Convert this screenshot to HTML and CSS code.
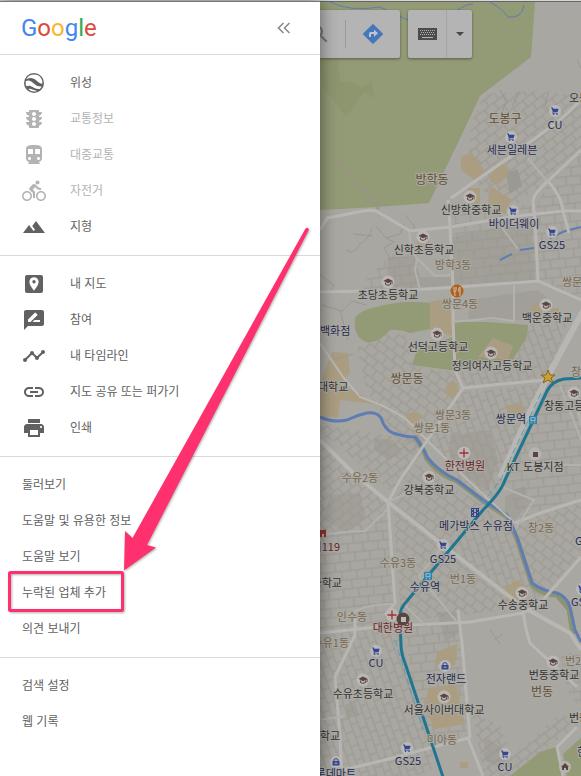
FILE: index.html
```html
<!DOCTYPE html>
<html lang="ko">
<head>
    <meta charset="UTF-8">
    <meta name="viewport" content="width=device-width, initial-scale=1.0">
    <title>Google 지도</title>
    <link rel="stylesheet" href="styles.css">
</head>
<body>
    <div class="app">
        <nav class="sidebar">
            <div class="sidebar-header">
                <a href="#" class="logo"><span class="blue">G</span><span class="red">o</span><span class="yellow">o</span><span class="blue">g</span><span class="green">l</span><span class="red">e</span></a>
                <button type="button" class="collapse" aria-label="메뉴 닫기">
                    <svg width="14" height="12" viewBox="0 0 14 12"><path d="M6.500 1 1.500 6l5 5M12.500 1l-5 5 5 5" fill="none" stroke="#8a8a8a" stroke-width="1.600"/></svg>
                </button>
            </div>

            <div class="section">
                <button type="button" class="item">
                    <svg class="icon" viewBox="0 0 24 24"><circle cx="12" cy="12" r="10"/><path fill="#fff" d="M4.200 8.200C6 4.800 9 3.600 12.300 3.600c3.200 0 5.700 1.500 7.100 4.100 1 1.900 1.200 3.500.9 5-2.200-.2-4-1.300-5.900-3.300C11.700 6.700 8.300 6 4.200 8.200zM3.700 10.200c3-1.300 5.200-.4 7.500 1.900 2.600 2.600 4.900 3.600 8.500 3.500-.5 1-1.100 1.800-1.800 2.400-4.500.4-6.500-1.800-9-2.800-1.900-.8-3.300-.5-4.600.1-.6-1.500-.8-3.200-.6-5.100zM6.400 18c2.300-.7 4.500 1.200 8.600 1.900-2.900 1.200-6.400.6-8.600-1.900z"/></svg>
                    <span>위성</span>
                </button>
                <button type="button" class="item" disabled>
                    <svg class="icon" viewBox="0 0 24 24"><path d="M20 10h-3V8.860c1.720-.45 3-2 3-3.860h-3V4c0-.55-.45-1-1-1H8c-.55 0-1 .45-1 1v1H4c0 1.860 1.280 3.410 3 3.860V10H4c0 1.860 1.280 3.410 3 3.860V15H4c0 1.860 1.280 3.410 3 3.860V20c0 .55.45 1 1 1h8c.55 0 1-.45 1-1v-1.140c1.720-.45 3-2 3-3.860h-3v-1.140c1.720-.45 3-2 3-3.860zm-8 9c-1.110 0-2-.9-2-2s.89-2 2-2c1.100 0 2 .9 2 2s-.89 2-2 2zm0-5c-1.110 0-2-.9-2-2s.89-2 2-2c1.100 0 2 .9 2 2s-.89 2-2 2zm0-5c-1.110 0-2-.9-2-2 0-1.110.89-2 2-2 1.100 0 2 .89 2 2 0 1.100-.89 2-2 2z"/></svg>
                    <span>교통정보</span>
                </button>
                <button type="button" class="item" disabled>
                    <svg class="icon" viewBox="0 0 24 24"><path d="M12 2c-4.420 0-8 .5-8 4v9.500C4 17.430 5.570 19 7.500 19L6 20.500v.5h12v-.5L16.500 19c1.930 0 3.500-1.570 3.500-3.500V6c0-3.500-3.580-4-8-4zM7.500 17c-.83 0-1.500-.67-1.500-1.500S6.670 14 7.500 14s1.500.67 1.500 1.500S8.330 17 7.500 17zm3.500-6H6V6h5v5zm5.500 6c-.83 0-1.500-.67-1.500-1.500s.67-1.500 1.500-1.500 1.500.67 1.500 1.500-.67 1.500-1.500 1.500zm1.500-6h-5V6h5v5z"/></svg>
                    <span>대중교통</span>
                </button>
                <button type="button" class="item" disabled>
                    <svg class="icon" viewBox="0 0 24 24"><path d="M15.500 5.500c1.100 0 2-.9 2-2s-.9-2-2-2-2 .9-2 2 .9 2 2 2zM5 12c-2.800 0-5 2.200-5 5s2.200 5 5 5 5-2.200 5-5-2.200-5-5-5zm0 8.500c-1.900 0-3.500-1.600-3.500-3.500s1.600-3.500 3.500-3.500 3.500 1.600 3.500 3.500-1.600 3.500-3.500 3.500zm5.800-10l2.400-2.400.8.8c1.300 1.300 3 2.100 5.100 2.100V9c-1.500 0-2.700-.6-3.600-1.500l-1.900-1.900c-.5-.4-1-.6-1.600-.6s-1.100.2-1.400.6L7.800 8.400c-.4.4-.6.9-.6 1.400 0 .6.2 1.100.6 1.400L11 14v5h2v-6.200l-2.200-2.300zM19 12c-2.800 0-5 2.200-5 5s2.200 5 5 5 5-2.200 5-5-2.200-5-5-5zm0 8.500c-1.900 0-3.500-1.600-3.500-3.500s1.600-3.500 3.500-3.500 3.500 1.600 3.500 3.500-1.600 3.500-3.500 3.500z"/></svg>
                    <span>자전거</span>
                </button>
                <button type="button" class="item">
                    <svg class="icon" viewBox="0 0 24 24"><path d="M14 6l-3.750 5 2.850 3.800-1.600 1.200C9.810 13.750 7 10 7 10l-6 8h22L14 6z"/></svg>
                    <span>지형</span>
                </button>
            </div>

            <div class="section">
                <button type="button" class="item">
                    <svg class="icon" viewBox="0 0 24 24"><path fill-rule="evenodd" d="M5 3h14a2 2 0 0 1 2 2v14a2 2 0 0 1-2 2H5a2 2 0 0 1-2-2V5a2 2 0 0 1 2-2zm7 2.200A4.600 4.600 0 0 0 7.400 9.800C7.400 13.300 12 18.800 12 18.800s4.600-5.500 4.600-9A4.600 4.600 0 0 0 12 5.200zm0 2.900a1.700 1.700 0 1 1 0 3.400 1.700 1.700 0 0 1 0-3.400z"/></svg>
                    <span>내 지도</span>
                </button>
                <button type="button" class="item">
                    <svg class="icon" viewBox="0 0 24 24"><path d="M20 2H4c-1.100 0-1.990.9-1.990 2L2 22l4-4h14c1.100 0 2-.9 2-2V4c0-1.100-.9-2-2-2zM6 14v-2.470l6.880-6.880c.2-.2.51-.2.71 0l1.770 1.770c.2.2.2.51 0 .71L8.470 14H6zm12 0h-7.500l2-2H18v2z"/></svg>
                    <span>참여</span>
                </button>
                <button type="button" class="item">
                    <svg class="icon" viewBox="0 0 24 24"><path d="M23 8c0 1.100-.9 2-2 2-.18 0-.35-.02-.51-.07l-3.560 3.550c.05.16.07.34.07.52 0 1.100-.9 2-2 2s-2-.9-2-2c0-.18.02-.36.07-.52l-2.550-2.550c-.16.05-.34.07-.52.07s-.36-.02-.52-.07l-4.550 4.560c.05.16.07.33.07.51 0 1.100-.9 2-2 2s-2-.9-2-2 .9-2 2-2c.18 0 .35.02.51.07l4.560-4.550C8.020 9.360 8 9.180 8 9c0-1.100.9-2 2-2s2 .9 2 2c0 .18-.02.36-.07.52l2.550 2.550c.16-.05.34-.07.52-.07s.36.02.52.07l3.550-3.560C19.020 8.350 19 8.180 19 8c0-1.100.9-2 2-2s2 .9 2 2z"/></svg>
                    <span>내 타임라인</span>
                </button>
                <button type="button" class="item">
                    <svg class="icon" viewBox="0 0 24 24"><path d="M3.900 12c0-1.710 1.390-3.100 3.100-3.100h4V7H7c-2.760 0-5 2.240-5 5s2.240 5 5 5h4v-1.900H7c-1.710 0-3.100-1.390-3.100-3.100zM8 13h8v-2H8v2zm9-6h-4v1.900h4c1.710 0 3.100 1.390 3.100 3.100s-1.390 3.100-3.100 3.100h-4V17h4c2.760 0 5-2.240 5-5s-2.240-5-5-5z"/></svg>
                    <span>지도 공유 또는 퍼가기</span>
                </button>
                <button type="button" class="item">
                    <svg class="icon" viewBox="0 0 24 24"><path d="M19 8H5c-1.660 0-3 1.340-3 3v6h4v4h12v-4h4v-6c0-1.660-1.340-3-3-3zm-3 11H8v-5h8v5zm3-7c-.55 0-1-.45-1-1s.45-1 1-1 1 .45 1 1-.45 1-1 1zm-1-9H6v4h12V3z"/></svg>
                    <span>인쇄</span>
                </button>
            </div>

            <div class="section">
                <a href="#" class="item"><span>둘러보기</span></a>
                <a href="#" class="item"><span>도움말 및 유용한 정보</span></a>
                <a href="#" class="item"><span>도움말 보기</span></a>
                <a href="#" class="item"><span>누락된 업체 추가</span></a>
                <a href="#" class="item"><span>의견 보내기</span></a>
            </div>

            <div class="section">
                <a href="#" class="item"><span>검색 설정</span></a>
                <a href="#" class="item"><span>웹 기록</span></a>
            </div>
        </nav>

        <main class="map">
            <svg class="map-canvas" viewBox="320 2 261 774" preserveAspectRatio="xMinYMin slice">
                <defs>
                    <pattern id="st1" width="11" height="17" patternUnits="userSpaceOnUse" patternTransform="rotate(38)"><path class="street" d="M0 1h11M0 9h11M3 1v8M8 9v8"/></pattern>
                    <pattern id="st2" width="15" height="18" patternUnits="userSpaceOnUse" patternTransform="rotate(-6)"><path class="street" d="M0 1h15M0 10h15M4 1v9M10 10v8"/></pattern>
                    <pattern id="st3" width="12" height="16" patternUnits="userSpaceOnUse" patternTransform="rotate(-38)"><path class="street" d="M0 1h12M0 9h12M2 1v8M8 9v7"/></pattern>
                    <pattern id="st4" width="14" height="15" patternUnits="userSpaceOnUse" patternTransform="rotate(70)"><path class="street" d="M0 1h14M0 8h14M3 1v7M10 8v7"/></pattern>

                    <symbol id="cart" viewBox="-8 -8 16 16"><circle r="6" fill="#b9b9b9"/><path fill="#35468c" d="M-4-3.500h1.800l.5 1.200h5.400L2.600 1h-4l-.2.800h4.300v.8h-5.500l.6-1.700-1.200-3.600H-4z"/><circle cx="-1.400" cy="3.300" r=".8" fill="#35468c"/><circle cx="2" cy="3.300" r=".8" fill="#35468c"/></symbol>
                    <symbol id="school" viewBox="-8 -8 16 16"><circle r="6.500" fill="#bab8b6"/><path fill="#5a4540" d="M-4.500-1.200 0-3.600l4.500 2.400v3.400h-.9V-.4L0 1.300z"/><path fill="none" stroke="#5a4540" d="M-2.500.5V2.500Q0 4.200 2.500 2.500V.5"/></symbol>
                    <symbol id="hospital" viewBox="-8 -8 16 16"><circle r="6.500" fill="#bbb9b7"/><path stroke="#a3302c" stroke-width="1.300" d="M-4.500 0h9M0-4.500v9"/></symbol>
                    <symbol id="bag" viewBox="-8 -8 16 16"><circle r="6" fill="#b9b9b9"/><path fill="#35468c" d="M-3.500-1h7v4.500h-7z"/><path fill="none" stroke="#35468c" d="M-2-1v-1.500Q0-4.500 2-2.500V-1"/><path stroke="#b9b9b9" d="M-1.500 1.200h3"/></symbol>
                    <symbol id="station" viewBox="-8 -8 16 16"><rect x="-4" y="-4" width="8" height="8" rx="1" fill="#2585b0"/><path fill="#b5b9bb" d="M-2.500-2.800h5v4h-5zM-2.300 2.200h1.200v1h-1.200zM1.100 2.200h1.200v1H1.100z"/><path fill="#2585b0" d="M-1.500-1.800h3v2h-3z"/></symbol>
                </defs>

                <rect x="320" y="2" width="261" height="774" fill="#a9a7a1"/>

                <!-- built-up blocks -->
                <g fill="#a19f98">
                    <path d="M388 257h26l6 20h30l1-40 80-15 4 58-80 7-40 2-28-3zM470 300l68-10 12 10-22 20h-60z"/>
                    <path d="M450 435l40-5 8 30-10 30-20-10-18-22zM330 495l30-2 6 25-20 14-22-12zM505 497l20-12 4 18-16 20-8-6zM437 612h20l4 20-16 10z"/>
                    <path d="M374 438l20 2 8 14-14 6-14-12zM484 738l12 6 14 12-10 12-16-8zM345 705l10-4 4 14-12 4z"/>
                </g>

                <!-- street grids -->
                <path fill="url(#st3)" d="M472 122l12-28 50-3 47 5v54l-21 22-50 38-25-18-18-20z"/>
                <path fill="url(#st1)" d="M383 335l22-1 8 32 48 8 2 14-48 72-28-30-22-45-8-38z"/>
                <path fill="url(#st2)" d="M452 215l81-12 2 20 3 57-80 7zM548 184l33-30v145l-43-19-4-70zM390 255l28-2 2 38-55 1-3-8z"/>
                <path fill="url(#st4)" d="M528 325l40-5-20 60-80 7-10-14 54-13zM463 392l78-8-38 95-15 25-32-28-30-40z"/>
                <path fill="url(#st3)" d="M320 443l68 58-20 25-48 10zM395 437l18 2 15 20-12 3-22 32-38-32-20-20-16-8v-10z"/>
                <path fill="url(#st2)" d="M320 535l50-12 18-18 8 98v25l-76 8zM551 385h30v110l-60 25-16-35z"/>
                <path fill="url(#st1)" d="M393 507l50 42 78 60-120 12zM426 470l55 34-36 40-52-42 24-40zM516 523l65-22v55l-45 44z"/>
                <path fill="url(#st4)" d="M320 636l78-9 10 40 28 100-20 9h-96zM488 510l22 20 20 55 15 12-22 10-78-62z"/>
                <path fill="url(#st2)" d="M403 625l56-4 8 115-34 12-20-60zM560 650l21 5v55l-14-20z"/>
                <path fill="url(#st3)" d="M472 712l28 14 12 30 50-44 18 12-40 28-30 24h-26z"/>
                <path fill="#9b9994" d="M506 172l12-2 4 16-12 8z"/>

                <!-- parks and school grounds -->
                <path fill="#929a76" d="M320 2h215l-4 55-51 39-16 34-35 73-52 4-57 3z"/>
                <path fill="#8e9670" d="M338 58l2 24h12l10 6 10-8 2 18-10-6-18 25-24-32-2-25z"/>
                <path fill="#929a76" d="M355 318q5-8 22-11 25-7 53-4v26l-20 4q-10-4-20-3-12 14-23 12-14-4-12-24z"/>
                <path fill="#929a76" d="M455 322h32l41 3-1 12-14 22-38 6-25 5-38-5 5-15 36-13z"/>
                <path fill="#929a76" d="M510 776l30-24 16-5 8 29zM567 776l-4-22 18-16v38z"/>
                <g fill="#aa9d82">
                    <path d="M430 302q12-4 22 1v33l-22-7zM493 338l20 8-5 14-30-3z"/>
                    <path d="M461 157l10-5 13 18-7 12-16-12zM490 175l6-10 9-1 4 10-10 10-9-2zM490 186l22 14-7 14-17-10zM468 188h12v16h-12z"/>
                    <path d="M320 384l12-32 16 1 2 20-10 12q20 8 36 19l-36-4-2 17h-18zM406 415q8-6 16 0l-4 8h-10zM447 385l6-5 6 8-6 10-7-5zM507 405h16v10h-16zM532 305h10v10h-10z"/>
                    <path d="M505 588l12-8 10 8v14l-20 3zM437 652l20-8-2 22-20-2zM428 688l28-4 9 40-30 5-10-20zM460 762h8v6h-8zM417 237h12v10h-12zM382 276h12v10h-12zM426 470h10v10h-10zM547 308h12v9h-12z"/>
                </g>
                <path fill="none" stroke="#9c9484" stroke-width="3" stroke-dasharray="6 2" d="M336 163l12 6 5 14 12 6 4 10 9 2v10"/>

                <!-- hill trails -->
                <g class="street">
                    <path d="M372 228q-2 10-12 16-6 12-14 6M376 226l10 12 8 4-10 6 6 10M386 238l14-4 4-10M405 215l10 12-6 6M373 236l-20-2M320 275l14 10-4 8M322 305l20 6 10-10 14 4M500 90l6 12-4 10M520 92l-8 14M549 90l-4 15 6 10M577 60l4 8"/>
                    <path d="M490 630l10 14M494 640l8-6M333 360l20-6M340 310l8 30"/>
                </g>

                <!-- water -->
                <g fill="none" stroke="#5e7db3" stroke-width="1.500">
                    <path d="M330 2q20 10 50 5l30 14M455 12q10-8 18-8M490 2q14 8 18 15 14 2 16-12M385 216l22 14" stroke-width="1"/>
                    <path d="M500 260l12-6M520 250l14-2M550 238l15-7 16-4" stroke-width="2"/>
                </g>
                <path fill="none" stroke="#8d9372" stroke-width="5" d="M415 437q8 10 12 22 12 16 30 22l26 20 24 16 10 22 15 46q10 10 25 10l12 14 4 25"/>
                <path fill="none" stroke="#5e7db3" stroke-width="3" d="M320 417q14 6 27 3 10-5 20-7 10-1 14 5 4 12 12 15 12 4 22 4 8 10 12 20 12 15 30 23l26 20 24 15 10 22 15 46q10 8 25 10 10 4 13 14l5 23 6 12"/>

                <!-- main roads -->
                <g fill="none" stroke="#b9b7b4" stroke-width="3">
                    <path d="M320 230l7-12 36-7q10-2 15 1l32 19 40-4 60-10 53-6h18M320 292l90-2 47-3 81-6 43 19M581 150l-33 31q-14 12-15 20l2 20 3 60M548 181q14 16 15 30l6 22"/>
                    <path d="M448 200l2 27 3 60v33l2 50 8 18 80-8M451 198l59-41 50-37 21-20M463 388l-63 92-12 22 7 101-10 12"/>
                    <path d="M320 440l33 33 35 29 55 43 80 62 47 26 11 17" stroke-width="4"/>
                    <path d="M320 343l23 34 17 20q30 10 47 23l40 40 40 38 28 25" stroke-width="2"/>
                    <path d="M320 633l57-6 93-5 53-9 20-13 38-43M581 500l-41 13-25 10M355 615v20l-20 42 5 60 2 39"/>
                    <path d="M343 770l50-12 40-11 35-9 15 38M458 610l4 33 8 95M523 610q2 18 7 33l47 44M577 727l-20 20 6 29"/>
                </g>
                <g fill="none" stroke="#b3b1ad" stroke-width="2">
                    <path d="M409 232q2 20 8 26l18 18 17-1M417 258l-2 12 5 20M500 225l18 24M514 285v36M453 322l40-4 21 3M320 535q30-4 45-4l23-22M347 615q20-12 48-11M403 604l23 22M500 486l34 14-18 28M320 650l-2 4M320 720l24-4M388 502l22-10M443 546l-24 30 38 46"/>
                    <path d="M575 395l6 30M530 465h51M560 385l21 55M548 182l-20-24"/>
                </g>
                <path fill="none" stroke="#b9b7b4" stroke-width="6" d="M583 311l-35 65-20 40-28 62"/>

                <!-- subway line -->
                <path fill="none" stroke="#207590" stroke-width="3" d="M581 378l-17 1q-12 2-17 12l-14 30-28 59q-4 12-22 30l-56 67-20 24q-8 8-7 18l1 26q0 8 4 18l20 60 19 57"/>
                <path fill="none" stroke="#5a9db5" stroke-dasharray="7 3" d="M541 393l-40 86-26 34M395 640l28 90"/>

                <use href="#cart" x="547" y="103" width="16" height="16"/>
                <use href="#cart" x="503" y="129" width="16" height="16"/>
                <use href="#cart" x="505" y="203" width="16" height="16"/>
                <use href="#cart" x="544" y="224" width="16" height="16"/>
                <use href="#cart" x="435" y="537" width="16" height="16"/>
                <use href="#cart" x="368" y="643" width="16" height="16"/>
                <use href="#cart" x="399" y="740" width="16" height="16"/>
                <use href="#cart" x="497" y="746" width="16" height="16"/>
                <use href="#cart" x="574" y="581" width="16" height="16"/>
                <use href="#school" x="462" y="189" width="16" height="16"/>
                <use href="#school" x="415" y="229" width="16" height="16"/>
                <use href="#school" x="380" y="274" width="16" height="16"/>
                <use href="#school" x="538" y="297" width="16" height="16"/>
                <use href="#school" x="429" y="326" width="16" height="16"/>
                <use href="#school" x="483" y="345" width="16" height="16"/>
                <use href="#school" x="566" y="385" width="16" height="16"/>
                <use href="#school" x="421" y="469" width="16" height="16"/>
                <use href="#school" x="514" y="585" width="16" height="16"/>
                <use href="#school" x="545" y="654" width="16" height="16"/>
                <use href="#school" x="355" y="672" width="16" height="16"/>
                <use href="#school" x="436" y="689" width="16" height="16"/>
                <use href="#hospital" x="456" y="445" width="16" height="16"/>
                <use href="#hospital" x="384" y="607" width="16" height="16"/>
                <use href="#bag" x="437" y="658" width="16" height="16"/>
                <use href="#bag" x="328" y="754" width="16" height="16"/>
                <use href="#station" x="525" y="412" width="16" height="16"/>
                <use href="#station" x="420" y="568" width="16" height="16"/>
                <circle cx="457" cy="291" r="6.500" fill="#b0601f"/>
                <path fill="none" stroke="#d0c4b8" d="M454 287v4q1 1 1 5M456 287v4l-1 1M460 296v-9q-2 1-1 5"/>
                <circle cx="535" cy="454" r="6.500" fill="#b6b4b2"/><path fill="#5a4540" d="M533 452h5v5h-5z"/>
                <path fill="#35468c" fill-rule="evenodd" d="M471 508h8v9h-8zm1 1v1h1v-1zm0 3v1h1v-1zm0 3v1h1v-1zm5-6v1h1v-1zm0 3v1h1v-1zm0 3v1h1v-1zm-3-6v3h2v-3zm0 4v3h2v-3z"/>
                <circle cx="565" cy="767" r="6" fill="#b6b4b2"/><path fill="#5a4540" d="M565 763l4 4h-1v3h-2v-2h-2v2h-2v-3h-1z"/>
                <path fill="#92322c" d="M320 530h5v-1l1 1v7h-2v-3h-2v3h-2z"/>
                <path fill="#c3a62f" stroke="#8d6122" d="M548 370l2 5h5l-4 3 2 5-5-3-5 3 2-5-4-3h5z"/>

                <g class="label poi">
                    <text x="569" y="102">오봉</text>
                    <text x="471" y="214" class="mid">신방학중학교</text>
                    <text x="424" y="254" class="mid">신학초등학교</text>
                    <text x="388" y="299" class="mid">초당초등학교</text>
                    <text x="547" y="322" class="mid">백운중학교</text>
                    <text x="438" y="351" class="mid">선덕고등학교</text>
                    <text x="492" y="370" class="mid">정의여자고등학교</text>
                    <text x="318" y="391">대학교</text>
                    <text x="544" y="410">창동고등</text>
                    <text x="535" y="471" class="mid">KT 도봉지점</text>
                    <text x="429" y="494" class="mid">강북중학교</text>
                    <text x="342" y="587" class="end">중학교</text>
                    <text x="523" y="609" class="mid">수송중학교</text>
                    <text x="554" y="679" class="mid">번동중학교</text>
                    <text x="363" y="698" class="mid">수유초등학교</text>
                    <text x="444" y="714" class="mid">서울사이버대학교</text>
                    <text x="569" y="722">번동</text>
                    <text x="577" y="756">한</text>
                    <text x="340" y="740" class="end">초등학교</text>
                </g>
                <g class="label shop">
                    <text x="555" y="129" class="mid">CU</text>
                    <text x="512" y="154" class="mid">세븐일레븐</text>
                    <text x="514" y="228" class="mid">바이더웨이</text>
                    <text x="552" y="249" class="mid">GS25</text>
                    <text x="320" y="335">백화점</text>
                    <text x="511" y="423" class="mid">쌍문역</text>
                    <text x="476" y="530" class="mid">메가박스 수유점</text>
                    <text x="575" y="545">GS25</text>
                    <text x="443" y="563" class="mid">GS25</text>
                    <text x="425" y="591" class="mid">수유역</text>
                    <text x="571" y="606">GS25</text>
                    <text x="376" y="667" class="mid">CU</text>
                    <text x="446" y="683" class="mid">전자랜드</text>
                    <text x="408" y="765" class="mid">GS25</text>
                    <text x="505" y="771" class="mid">CU</text>
                    <text x="356" y="778" class="end">롯데마트</text>
                </g>
                <g class="label clinic">
                    <text x="465" y="470" class="mid">한전병원</text>
                    <text x="340" y="551" class="end">비119</text>
                    <text x="393" y="632" class="mid">대한병원</text>
                </g>
                <g class="label dong">
                    <text x="453" y="269" class="mid">방학3동</text>
                    <text x="460" y="308" class="mid">쌍문4동</text>
                    <text x="562" y="286">쌍문2동</text>
                    <text x="571" y="376">창1동</text>
                    <text x="453" y="419" class="mid">쌍문3동</text>
                    <text x="432" y="432" class="mid">쌍문1동</text>
                    <text x="360" y="482" class="mid">수유2동</text>
                    <text x="541" y="532" class="mid">창2동</text>
                    <text x="398" y="567" class="mid">수유3동</text>
                    <text x="463" y="583" class="mid">번1동</text>
                    <text x="352" y="621" class="mid">인수동</text>
                    <text x="349" y="647" class="end">수유1동</text>
                    <text x="565" y="665">번2동</text>
                    <text x="442" y="744" class="mid">미아동</text>
                </g>
                <g class="label area">
                    <text x="505" y="123" class="mid">도봉구</text>
                    <text x="432" y="184" class="mid">방학동</text>
                    <text x="407" y="383" class="mid">쌍문동</text>
                    <text x="542" y="696" class="mid">번동</text>
                </g>
                <circle cx="403" cy="619" r="6.500" fill="#594540"/><path fill="#bbb" d="M401 617h5v5h-5z"/>
            </svg>

            <div class="controls">
                <div class="card">
                    <button type="button" class="search" aria-label="검색">
                        <svg width="11" height="24" viewBox="13 0 11 24"><path fill="#777" d="M15.500 14h-.79l-.28-.27A6.470 6.470 0 0 0 16 9.500 6.500 6.500 0 1 0 9.500 16c1.610 0 3.090-.59 4.230-1.570l.27.28v.79l5 4.990L20.490 19l-4.990-5zm-6 0a4.500 4.500 0 1 1 0-9 4.500 4.500 0 0 1 0 9z"/></svg>
                    </button>
                    <button type="button" class="directions" aria-label="길찾기">
                        <svg width="20" height="20" viewBox="0 0 20 20"><path fill="#4677bb" d="M9.300.4a1 1 0 0 1 1.400 0l8.900 8.900a1 1 0 0 1 0 1.400l-8.900 8.900a1 1 0 0 1-1.400 0L.4 10.700a1 1 0 0 1 0-1.400z"/><path fill="#c2c5ca" d="M6 13V9.500A1.500 1.500 0 0 1 7.500 8H11V5.500l4 3.700-4 3.600V10H8v3z"/></svg>
                    </button>
                </div>
                <div class="card">
                    <button type="button" class="keyboard" aria-label="입력 도구">
                        <svg width="19" height="12" viewBox="0 0 19 12"><path fill="#4b4b4b" d="M0 0h19v12H0z"/><path stroke="#b3b3b3" stroke-dasharray="1 1" d="M2 2.500h15M3 4.500h13M2 6.500h15"/><path stroke="#b3b3b3" d="M4 9.500h11"/></svg>
                    </button>
                    <button type="button" class="dropdown" aria-label="입력 도구 선택">
                        <svg width="8" height="4" viewBox="0 0 8 4"><path fill="#484848" d="M0 0h8L4 4z"/></svg>
                    </button>
                </div>
            </div>
        </main>
    </div>

    <svg class="callout" width="320" height="620" viewBox="0 0 320 620">
        <rect x="9.500" y="572.500" width="113" height="38" rx="1" fill="none" stroke="#ff306e" stroke-width="3"/>
        <path fill="#ff306e" d="M305.500 228.500q2-2 3.500 1L147 545l9 2.500-32 23 1-39.500 7.500 7z"/>
    </svg>
</body>
</html>
```
FILE: styles.css
```css
* {
    box-sizing: border-box;
}
body {
    margin: 0;
    font-family: "Liberation Sans", "Noto Sans CJK KR", sans-serif;
    font-size: 12px;
    color: #616161;
    background-color: #fff;
    position: relative;
    overflow: hidden;
}
button {
    font: inherit;
    color: inherit;
    background: none;
    border: none;
    margin: 0;
    padding: 0;
    cursor: pointer;
}
a {
    color: inherit;
    text-decoration: none;
}
.app {
    display: flex;
    min-height: 100vh;
    border-top: 1px solid #d6d6d6;
}

/* sidebar */
.sidebar {
    flex: 0 0 320px;
    background-color: #fff;
    border-top: 1px solid #777;
    box-shadow: 0 0 16px rgba(0, 0, 0, 0.5);
    z-index: 2;
}
.sidebar-header {
    display: flex;
    align-items: center;
    justify-content: space-between;
    height: 53px;
    padding: 0 29px 0 21px;
    border-bottom: 1px solid #d9d9d9;
}
.logo {
    font-family: Roboto, sans-serif;
    font-size: 24px;
    font-weight: 400;
    line-height: 28px;
}
.blue { color: #4285f4; }
.red { color: #dd4b3e; }
.yellow { color: #f6b82a; }
.green { color: #34a853; }
.collapse {
    display: flex;
}
.section {
    padding: 9px 0 11px;
    border-bottom: 1px solid #d9d9d9;
}
.section:last-child {
    border-bottom: none;
}
.item {
    display: flex;
    align-items: center;
    gap: 24px;
    width: 100%;
    height: 36px;
    padding: 2px 22px 0;
    text-align: left;
}
.item span {
    padding-bottom: 4px;
}
.item:disabled {
    color: #b3b3b3;
    cursor: default;
}
.icon {
    width: 24px;
    height: 24px;
    fill: currentColor;
}

/* map */
.map {
    flex: 1;
    position: relative;
    border-top: 1px solid #666;
    background-color: #a9a7a1;
    overflow: hidden;
}
.map-canvas {
    position: absolute;
    top: 0;
    left: 0;
    width: 100%;
    height: 100%;
}
.street {
    fill: none;
    stroke: #9b9790;
    stroke-width: 1;
}
.label {
    font-family: "Noto Sans CJK KR", sans-serif;
    font-size: 11px;
    paint-order: stroke;
    stroke: #adaba6;
    stroke-width: 2px;
    stroke-linejoin: round;
}
.mid { text-anchor: middle; }
.end { text-anchor: end; }
.poi { fill: #333; }
.shop { fill: #252b52; }
.clinic { fill: #6b2628; }
.dong { fill: #77694f; }
.area {
    fill: #5f4e31;
    font-size: 12px;
}

.controls {
    position: absolute;
    top: 8px;
    left: 0;
    display: flex;
    gap: 8px;
}
.card {
    display: flex;
    align-items: center;
    height: 48px;
    background-color: #b4b4b4;
    border-radius: 0 2px 2px 0;
    box-shadow: 0 1px 3px rgba(0, 0, 0, 0.4);
}
.card + .card {
    border-radius: 2px;
}
.card button {
    display: flex;
    align-items: center;
    justify-content: center;
}
.search {
    height: 28px;
    padding-right: 14px;
    border-right: 1px solid #999;
}
.directions {
    width: 54px;
    height: 48px;
}
.keyboard {
    width: 39px;
    height: 48px;
    border-right: 1px solid #a6a6a6;
}
.dropdown {
    width: 25px;
    height: 48px;
}

/* arrow and frame over the menu */
.callout {
    position: absolute;
    top: 0;
    left: 0;
    z-index: 3;
    pointer-events: none;
    filter: drop-shadow(1px 1px 1px rgba(0, 0, 0, 0.3));
}
```
